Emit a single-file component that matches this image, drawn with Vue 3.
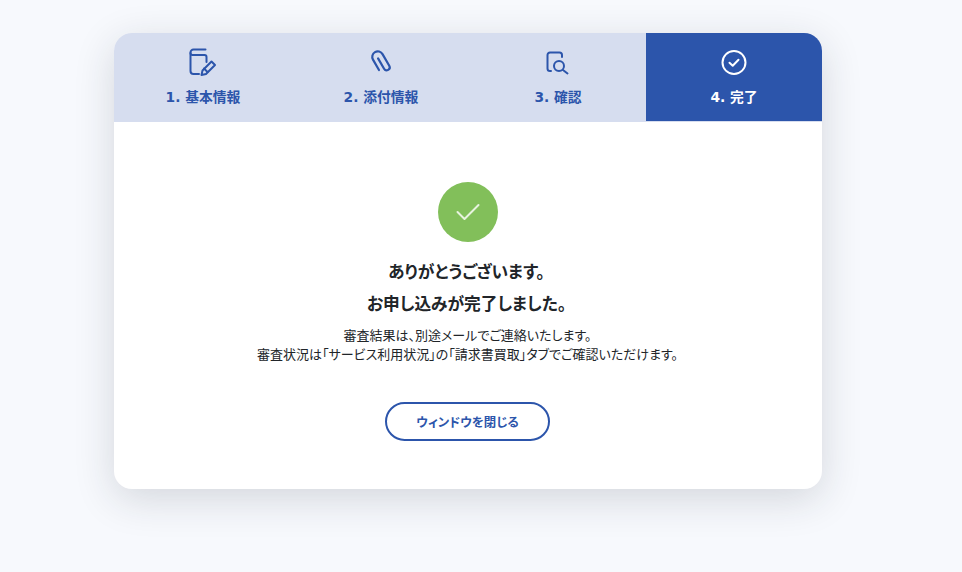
<script setup>
const steps = [
  { id: 'info', label: '1. 基本情報' },
  { id: 'attach', label: '2. 添付情報' },
  { id: 'confirm', label: '3. 確認' },
  { id: 'done', label: '4. 完了', active: true }
];
</script>

<template>
  <div class="page">
    <div class="card">
      <div class="steps">
        <div v-for="step in steps" :key="step.id" class="step" :class="[step.id, { active: step.active }]">
          <svg v-if="step.id === 'info'" class="icon" width="30" height="30" viewBox="0 0 30 30" fill="none" stroke="currentColor" stroke-width="2" stroke-linecap="round" stroke-linejoin="round">
            <path d="M11 27H5.500A3 3 0 0 1 2.500 24V5.500A3 3 0 0 1 5.500 2.500H17.500" />
            <path d="M2.500 6a2 2 0 0 0 2 2H16.500a2 2 0 0 1 2 2V15" />
            <path d="M13.500 28l1-4.500 9-9 3.500 3.500-9 9z" />
            <path d="M16 21.500l3.500 3.500" />
          </svg>
          <svg v-else-if="step.id === 'attach'" class="icon" width="30" height="30" viewBox="0 0 30 30" fill="none" stroke="currentColor" stroke-width="2.200" stroke-linecap="round" stroke-linejoin="round">
            <path transform="rotate(-30 15 15.500)" d="M9.500 21V9a5.500 5.500 0 0 1 11 0V22.500a3 3 0 0 1-6 0V10.500" />
          </svg>
          <svg v-else-if="step.id === 'confirm'" class="icon" width="30" height="30" viewBox="0 0 30 30" fill="none" stroke="currentColor" stroke-width="2" stroke-linecap="round" stroke-linejoin="round">
            <path d="M8 24H7A2.500 2.500 0 0 1 4.500 21.500V8A2.500 2.500 0 0 1 7 5.500H16.500A2.500 2.500 0 0 1 19 8V10" />
            <circle cx="16" cy="19" r="5" />
            <path d="M20 23l4.500 3.500" />
          </svg>
          <svg v-else class="icon" width="30" height="30" viewBox="0 0 30 30" fill="none" stroke="currentColor" stroke-width="2" stroke-linecap="round" stroke-linejoin="round">
            <circle cx="15" cy="15.500" r="11.500" />
            <path d="M10.500 15.700l3.200 3 5.800-6" />
          </svg>
          <span class="label">{{ step.label }}</span>
        </div>
      </div>
      <div class="body">
        <div class="badge">
          <svg width="26" height="20" viewBox="0 0 26 20" fill="none" stroke="#e8f3df" stroke-width="2" stroke-linecap="round" stroke-linejoin="round">
            <path d="M2.500 10l7 7L23.500 3" />
          </svg>
        </div>
        <h1 class="title first">ありがとうございます。</h1>
        <h1 class="title">お申し込みが完了しました。</h1>
        <p class="note">審査結果は、別途メールでご連絡いたします。<br />審査状況は「サービス利用状況」の「請求書買取」タブでご確認いただけます。</p>
        <button class="close" type="button">ウィンドウを閉じる</button>
      </div>
    </div>
  </div>
</template>

<style>
html, body {
  margin: 0;
  background: #f7f9fd;
}
</style>

<style scoped>
.page {
  width: 962px;
  height: 572px;
  box-sizing: border-box;
  padding: 33px 0 0 114px;
  overflow: hidden;
  font-family: "Noto Sans CJK JP", "Noto Sans", sans-serif;
}

.card {
  width: 708px;
  height: 456px;
  border-radius: 18px;
  background: #fff;
  overflow: hidden;
  box-shadow: 0 10px 40px rgba(30, 40, 50, 0.16);
}

.steps {
  display: grid;
  grid-template-columns: 178px 178px 176px 176px;
  height: 89px;
  background: #d6ddef;
  color: #2c55ab;
}

.step {
  display: flex;
  flex-direction: column;
  align-items: center;
  padding-top: 14px;
  box-sizing: border-box;
}

.step.active {
  height: 88px;
  background: #2c55ab;
  color: #fff;
}

.icon {
  display: block;
}

.label {
  margin-top: 10px;
  font-family: "DejaVu Sans", "Noto Sans CJK JP", sans-serif;
  font-size: 13.8px;
  line-height: 20px;
  font-weight: 700;
}

.body {
  display: flex;
  flex-direction: column;
  align-items: center;
  padding-top: 60px;
  font-feature-settings: "palt";
}

.badge {
  width: 60px;
  height: 60px;
  border-radius: 50%;
  background: #82bf5a;
  display: flex;
  align-items: center;
  justify-content: center;
}

.title {
  margin: 0 3px 0 0;
  font-size: 16.7px;
  line-height: 32px;
  font-weight: 700;
  color: #212529;
}

.title.first {
  margin-top: 13px;
}

.note {
  margin: 6px 1px 0 0;
  font-size: 13px;
  line-height: 19px;
  text-align: center;
  color: #212529;
}

.close {
  margin: 39px 1px 0 0;
  width: 165px;
  height: 39px;
  border: 2px solid #2c55ab;
  border-radius: 20px;
  background: #fff;
  color: #2c55ab;
  font-family: inherit;
  font-feature-settings: inherit;
  font-size: 12.4px;
  font-weight: 700;
  padding: 0;
}
</style>
